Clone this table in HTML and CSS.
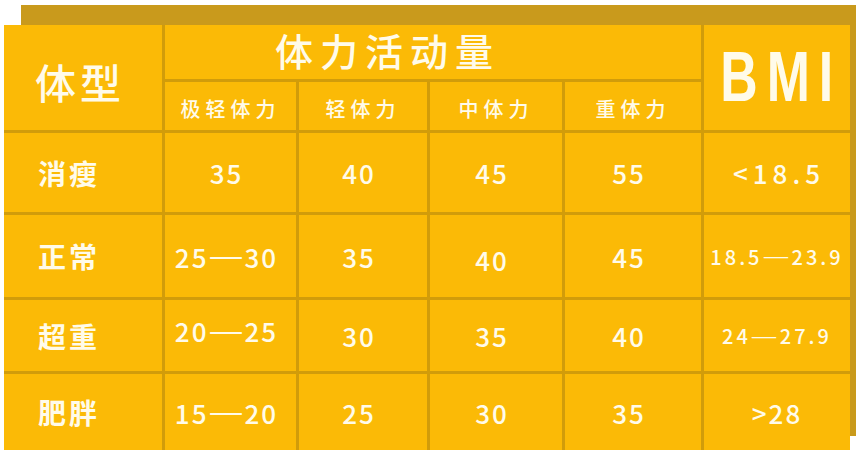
FILE: index.html
```html
<!DOCTYPE html>
<html lang="zh">
<head>
<meta charset="utf-8">
<title>BMI</title>
<link rel="stylesheet" href="styles.css">
</head>
<body>
<div class="page">
  <div class="top-strip"></div>
  <div class="row">
    <div class="table">
      <div class="cell head-type">体型</div>
      <div class="cell head-activity">体力活动量</div>
      <div class="cell head-bmi"><span class="bmi">BMI</span></div>
      <div class="cell sub">极轻体力</div>
      <div class="cell sub">轻体力</div>
      <div class="cell sub">中体力</div>
      <div class="cell sub">重体力</div>

      <div class="cell label">消瘦</div>
      <div class="cell num">35</div>
      <div class="cell num">40</div>
      <div class="cell num">45</div>
      <div class="cell num">55</div>
      <div class="cell num bmi-a">&lt;18.5</div>

      <div class="cell label">正常</div>
      <div class="cell num">25<span class="dash">—</span>30</div>
      <div class="cell num">35</div>
      <div class="cell num low">40</div>
      <div class="cell num">45</div>
      <div class="cell num bmi-b">18.5<span class="dash">—</span>23.9</div>

      <div class="cell label">超重</div>
      <div class="cell num high">20<span class="dash">—</span>25</div>
      <div class="cell num">30</div>
      <div class="cell num">35</div>
      <div class="cell num">40</div>
      <div class="cell num bmi-b">24<span class="dash">—</span>27.9</div>

      <div class="cell label">肥胖</div>
      <div class="cell num">15<span class="dash">—</span>20</div>
      <div class="cell num">25</div>
      <div class="cell num">30</div>
      <div class="cell num">35</div>
      <div class="cell num bmi-c">&gt;28</div>
    </div>
    <div class="side-strip"></div>
  </div>
</div>
</body>
</html>
```

FILE: styles.css
```css
html, body {
  margin: 0;
  padding: 0;
  background: #ffffff;
}
.page {
  padding: 5px 0 0 4px;
  width: 852px;
  font-family: "Noto Sans CJK SC", "Noto Sans", sans-serif;
  color: #fffbea;
}
.top-strip {
  margin-left: 17px;
  height: 20px;
  background: #c99a1c;
}
.row {
  display: flex;
  align-items: flex-start;
}
.side-strip {
  width: 6px;
  height: 411px;
  background: #c99a1c;
}
.table {
  width: 846px;
  display: grid;
  grid-template-columns: 158px 131px 128px 132px 136px 146px;
  grid-template-rows: 54px 48px 79px 82px 71px 76px;
  gap: 3px;
  background: #d19c0a;
}
.cell {
  background: #fbba06;
  display: flex;
  align-items: center;
  justify-content: center;
  white-space: nowrap;
}
.head-type {
  grid-row: 1 / 3;
  justify-content: flex-start;
  padding-left: 31px;
  padding-top: 6px;
  font-size: 41px;
  font-weight: 500;
  letter-spacing: 4px;
}
.head-activity {
  grid-column: 2 / 6;
  justify-content: flex-start;
  padding-left: 110px;
  padding-bottom: 6px;
  font-size: 38px;
  font-weight: 500;
  letter-spacing: 7px;
}
.head-bmi {
  grid-column: 6;
  grid-row: 1 / 3;
  padding-bottom: 2px;
}
.bmi {
  display: inline-block;
  font-family: "Liberation Sans Narrow", "Liberation Sans", sans-serif;
  font-weight: 700;
  font-size: 70px;
  letter-spacing: 12px;
  margin-right: -8px;
  transform: scaleX(0.74);
}
.sub {
  font-size: 20px;
  font-weight: 500;
  letter-spacing: 5px;
  padding-top: 4px;
}
.label {
  justify-content: flex-start;
  padding-left: 34px;
  font-size: 28px;
  font-weight: 600;
  letter-spacing: 3px;
}
.num {
  font-size: 26px;
  font-weight: 500;
  letter-spacing: 2px;
  padding-right: 8px;
}
.dash {
  display: inline-block;
  font-family: "DejaVu Sans", sans-serif;
  font-weight: 400;
  letter-spacing: 0;
  transform: scaleX(1.35);
  margin: 0 6px 0 4px;
}
.low { padding-top: 6px; }
.high { padding-bottom: 10px; }
.bmi-a {
  font-size: 26px;
  letter-spacing: 5px;
  padding-right: 0;
  padding-left: 4px;
}
.bmi-b {
  font-size: 20px;
  letter-spacing: 3px;
  padding-right: 0;
}
.bmi-b .dash {
  margin: 0 6px 0 3px;
}
.bmi-c {
  font-size: 26px;
  padding-right: 0;
}
```
